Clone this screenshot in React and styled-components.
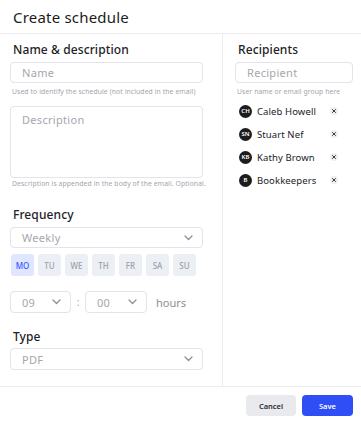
import React from "react";
import styled, { createGlobalStyle } from "styled-components";

const GlobalStyle = createGlobalStyle`
  html, body {
    margin: 0;
    padding: 0;
    background: #ffffff;
  }
  body {
    font-family: "Noto Sans", "Open Sans", sans-serif;
    color: #1f1f23;
  }
  * {
    box-sizing: border-box;
  }
`;

const Page = styled.div`
  width: 361px;
  height: 426px;
  display: flex;
  flex-direction: column;
  background: #fff;
`;

const Header = styled.div`
  height: 34px;
  padding: 0 13px;
  display: flex;
  align-items: center;
  border-bottom: 1px solid #ececef;
  font-size: 15px;
  letter-spacing: 0.2px;
  color: #1c1c20;
`;

const Body = styled.div`
  display: flex;
  height: 353px;
  border-bottom: 1px solid #ececef;
`;

const LeftColumn = styled.div`
  width: 223px;
  padding: 8px 19px 0 10px;
  border-right: 1px solid #ececef;
  display: flex;
  flex-direction: column;
`;

const RightColumn = styled.div`
  flex: 1;
  padding: 8px 8px 0 12px;
  display: flex;
  flex-direction: column;
`;

const Heading = styled.div`
  font-size: 12px;
  font-weight: 500;
  line-height: 16px;
  color: #222226;
  margin-top: ${(p) => p.$top || 0}px;
  padding-left: ${(p) => p.$indent || 3}px;
  letter-spacing: 0.1px;
`;

const Field = styled.div`
  height: ${(p) => p.$height || 21}px;
  width: ${(p) => p.$width || "100%"};
  margin-top: ${(p) => p.$top || 0}px;
  border: 1px solid #e3e3e8;
  border-radius: 4px;
  padding: ${(p) => (p.$multi ? "5px 11px" : "0 9px 0 11px")};
  display: flex;
  align-items: ${(p) => (p.$multi ? "flex-start" : "center")};
  justify-content: space-between;
  font-size: 11px;
  color: #a6a6ad;
  letter-spacing: 0.3px;
  background: #fff;
`;

const Helper = styled.div`
  font-size: 6.8px;
  line-height: 8px;
  color: #a4a4aa;
  margin-top: ${(p) => p.$top || 0}px;
  padding-left: 2px;
  letter-spacing: 0.1px;
  white-space: nowrap;
`;

const DayRow = styled.div`
  display: flex;
  gap: 4px;
  margin-top: 6px;
  padding-left: 1px;
`;

const Day = styled.div`
  width: 23px;
  height: 22px;
  border-radius: 3px;
  display: flex;
  align-items: center;
  justify-content: center;
  font-size: 8px;
  font-weight: 500;
  background: ${(p) => (p.$active ? "#e1e6ff" : "#eceff3")};
  color: ${(p) => (p.$active ? "#3557ff" : "#9ba1ab")};
`;

const TimeRow = styled.div`
  display: flex;
  align-items: center;
  margin-top: 15px;
  color: #a6a6ad;
  font-size: 11px;
`;

const Colon = styled.span`
  width: 14px;
  text-align: center;
  font-size: 10px;
`;

const Hours = styled.span`
  margin-left: 9px;
  color: #8e8e95;
`;

const List = styled.div`
  display: flex;
  flex-direction: column;
  gap: 9px;
  margin-top: 8px;
  padding-left: 4px;
`;

const Person = styled.div`
  display: flex;
  align-items: center;
  height: 14px;
`;

const Avatar = styled.div`
  width: 13px;
  height: 13px;
  border-radius: 50%;
  background: #1d1d20;
  color: #fff;
  font-size: 6px;
  font-weight: 600;
  display: flex;
  align-items: center;
  justify-content: center;
  flex-shrink: 0;
`;

const PersonName = styled.span`
  margin-left: 5px;
  font-size: 9.5px;
  color: #222226;
  flex: 1;
  letter-spacing: 0.1px;
`;

const Remove = styled.div`
  width: 8px;
  height: 8px;
  border-radius: 50%;
  background: #eeeef1;
  display: flex;
  align-items: center;
  justify-content: center;
  margin-right: 15px;
`;

const Footer = styled.div`
  display: flex;
  justify-content: flex-end;
  gap: 6px;
  padding: 8px 8px 0 0;
`;

const Button = styled.div`
  width: ${(p) => p.$width}px;
  height: 21px;
  border-radius: 4px;
  display: flex;
  align-items: center;
  justify-content: center;
  font-size: 7.5px;
  font-weight: 600;
  background: ${(p) => (p.$primary ? "#2f4ef5" : "#e9eaee")};
  color: ${(p) => (p.$primary ? "#ffffff" : "#2a2a30")};
`;

const Chevron = () => (
  <svg width="9" height="6" viewBox="0 0 9 6" fill="none">
    <path d="M1 1l3.5 3.5L8 1" stroke="#8f8f96" strokeWidth="1.3" strokeLinecap="round" strokeLinejoin="round" />
  </svg>
);

const Cross = () => (
  <svg width="4" height="4" viewBox="0 0 4 4" fill="none">
    <path d="M0.5 0.5l3 3M3.5 0.5l-3 3" stroke="#3a3a40" strokeWidth="1" strokeLinecap="round" />
  </svg>
);

const days = ["MO", "TU", "WE", "TH", "FR", "SA", "SU"];
const people = [
  { initials: "CH", name: "Caleb Howell" },
  { initials: "SN", name: "Stuart Nef" },
  { initials: "KB", name: "Kathy Brown" },
  { initials: "B", name: "Bookkeepers" },
];

export default function App() {
  return (
    <Page>
      <GlobalStyle />
      <Header>Create schedule</Header>
      <Body>
        <LeftColumn>
          <Heading>Name &amp; description</Heading>
          <Field $top={4}>Name</Field>
          <Helper $top={5}>Used to identify the schedule (not included in the email)</Helper>
          <Field $top={10} $height={72} $multi>
            Description
          </Field>
          <Helper $top={2}>Description is appended in the body of the email. Optional.</Helper>

          <Heading $top={19}>Frequency</Heading>
          <Field $top={4}>
            Weekly
            <Chevron />
          </Field>
          <DayRow>
            {days.map((d, i) => (
              <Day key={d} $active={i === 0}>
                {d}
              </Day>
            ))}
          </DayRow>
          <TimeRow>
            <Field $width="61px" $height={22}>
              09
              <Chevron />
            </Field>
            <Colon>:</Colon>
            <Field $width="62px" $height={22}>
              00
              <Chevron />
            </Field>
            <Hours>hours</Hours>
          </TimeRow>

          <Heading $top={16}>Type</Heading>
          <Field $top={3} $height={22}>
            PDF
            <Chevron />
          </Field>
        </LeftColumn>
        <RightColumn>
          <Heading>Recipients</Heading>
          <Field $top={4}>Recipient</Field>
          <Helper $top={5}>User name or email group here</Helper>
          <List>
            {people.map((p) => (
              <Person key={p.name}>
                <Avatar>{p.initials}</Avatar>
                <PersonName>{p.name}</PersonName>
                <Remove>
                  <Cross />
                </Remove>
              </Person>
            ))}
          </List>
        </RightColumn>
      </Body>
      <Footer>
        <Button $width={50}>Cancel</Button>
        <Button $width={51} $primary>
          Save
        </Button>
      </Footer>
    </Page>
  );
}
